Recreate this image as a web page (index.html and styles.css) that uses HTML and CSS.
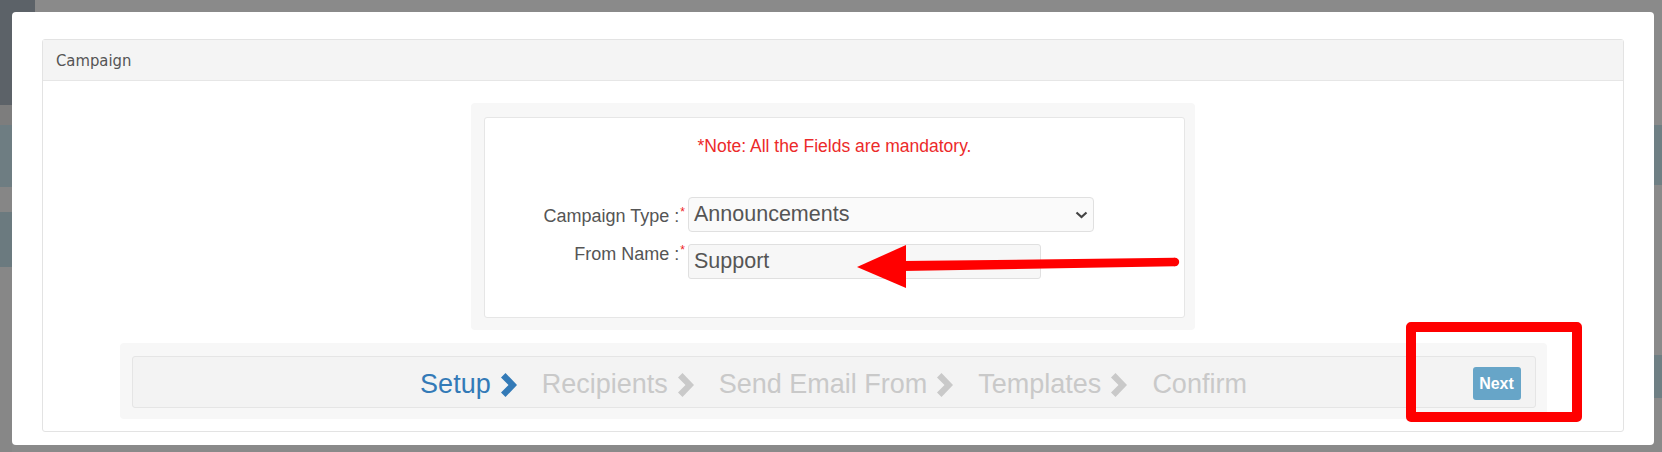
FILE: index.html
```html
<!DOCTYPE html>
<html>
<head>
<meta charset="utf-8">
<title>Campaign</title>
<link rel="stylesheet" href="styles.css">
</head>
<body>
<div class="modal">
  <div class="panel">
    <div class="panel-heading">Campaign</div>
    <div class="panel-body">
      <div class="well">
        <div class="card">
          <p class="note">*Note: All the Fields are mandatory.</p>
          <div class="row row-type">
            <label class="label label-type">Campaign Type :<sup>*</sup></label>
            <div class="select">
              <span>Announcements</span>
              <svg class="caret" width="13" height="8" viewBox="0 0 13 8"><path d="M1.5 1.5 L6.5 6 L11.5 1.5" fill="none" stroke="#444" stroke-width="2.2"/></svg>
            </div>
          </div>
          <div class="row row-name">
            <label class="label">From Name :<sup>*</sup></label>
            <div class="input">Support</div>
          </div>
        </div>
      </div>
      <div class="steps-wrap">
        <div class="steps">
          <div class="steps-list">
            <span class="step active">Setup<svg class="chev" width="17" height="24" viewBox="0 0 17 24"><polygon points="1,4.5 5.5,0 17,12 5.5,24 1,19.5 8.5,12"/></svg></span>
            <span class="step">Recipients<svg class="chev" width="17" height="24" viewBox="0 0 17 24"><polygon points="1,4.5 5.5,0 17,12 5.5,24 1,19.5 8.5,12"/></svg></span>
            <span class="step">Send Email From<svg class="chev" width="17" height="24" viewBox="0 0 17 24"><polygon points="1,4.5 5.5,0 17,12 5.5,24 1,19.5 8.5,12"/></svg></span>
            <span class="step">Templates<svg class="chev" width="17" height="24" viewBox="0 0 17 24"><polygon points="1,4.5 5.5,0 17,12 5.5,24 1,19.5 8.5,12"/></svg></span>
            <span class="step">Confirm</span>
          </div>
          <button class="btn-next">Next</button>
        </div>
      </div>
    </div>
  </div>
</div>
<svg class="arrow" width="1662" height="452" viewBox="0 0 1662 452">
  <polygon points="903,261 1175,257.8 1175,266.2 903,271" fill="#ff0000"/>
  <circle cx="1175" cy="262" r="4.2" fill="#ff0000"/>
  <polygon points="857,267 906,245 906,288" fill="#ff0000"/>
</svg>
<div class="highlight"></div>
</body>
</html>
```

FILE: styles.css
```css
html, body {
  margin: 0;
  padding: 0;
}

body {
  position: relative;
  width: 1662px;
  height: 452px;
  overflow: hidden;
  font-family: "Liberation Sans", Arial, sans-serif;
  background-color: #8a8a8a;
  background-image:
    linear-gradient(#5c6268, #5c6268),
    linear-gradient(to bottom, #5c6268 0 105px, #7d7d7d 105px 125px, #6e7d82 125px 187px, #868686 187px 212px, #6b7a7f 212px 267px, #878787 267px),
    linear-gradient(to bottom, #8a8a8a 0 125px, #6f7f84 125px 185px, #8a8a8a 185px 355px, #6f7f84 355px 398px, #8a8a8a 398px);
  background-size: 35px 105px, 12px 100%, 10px 100%;
  background-position: 0 0, 0 0, right top;
  background-repeat: no-repeat;
}

.modal {
  margin: 12px 0 0 12px;
  width: 1642px;
  height: 433px;
  box-sizing: border-box;
  padding: 27px 30px 13px 30px;
  background: #ffffff;
  border-radius: 4px;
}

.panel {
  height: 100%;
  box-sizing: border-box;
  border: 1px solid #e3e3e3;
  border-radius: 3px;
  display: flex;
  flex-direction: column;
}

.panel-heading {
  height: 41px;
  box-sizing: border-box;
  display: flex;
  align-items: center;
  padding-left: 13px;
  background: #f4f4f4;
  border-bottom: 1px solid #e6e6e6;
  font-family: "DejaVu Sans Condensed", "DejaVu Sans", sans-serif;
  font-stretch: condensed;
  font-size: 16.5px;
  color: #555555;
}

.panel-body {
  flex: 1;
  display: flex;
  flex-direction: column;
  align-items: center;
  padding-top: 22px;
}

.well {
  width: 724px;
  box-sizing: border-box;
  padding: 14px 10px 12px 13px;
  background: #f7f7f7;
  border-radius: 4px;
}

.card {
  height: 201px;
  box-sizing: border-box;
  padding-top: 18px;
  background: #ffffff;
  border: 1px solid #e6e6e6;
  border-radius: 3px;
}

.note {
  margin: 0;
  text-align: center;
  color: #ec2a2a;
  font-size: 17.5px;
  line-height: 20px;
}

.row {
  display: flex;
  align-items: flex-start;
}

.row-type {
  margin-top: 41px;
}

.row-name {
  margin-top: 12px;
}

.label {
  width: 200px;
  margin-right: 3px;
  text-align: right;
  font-size: 18px;
  line-height: 20px;
  color: #555555;
}

.label-type {
  padding-top: 9px;
}

.label sup {
  color: #ee1c1c;
  font-size: 12px;
  line-height: 12px;
  vertical-align: top;
  margin-left: 1px;
}

.select {
  width: 406px;
  height: 35px;
  box-sizing: border-box;
  display: flex;
  align-items: center;
  justify-content: space-between;
  padding: 0 5px 0 5px;
  background: #fafafa;
  border: 1px solid #e0e0e0;
  border-radius: 4px;
  font-size: 21.5px;
  color: #555555;
}

.caret {
  display: block;
}

.input {
  width: 353px;
  height: 35px;
  box-sizing: border-box;
  display: flex;
  align-items: center;
  padding-left: 5px;
  background: #f7f7f7;
  border: 1px solid #e0e0e0;
  border-radius: 3px;
  font-size: 21.5px;
  color: #555555;
}

.steps-wrap {
  margin-top: 13px;
  width: 1427px;
  box-sizing: border-box;
  padding: 13px 11px 11px 12px;
  background: #f7f7f7;
  border-radius: 4px;
}

.steps {
  height: 52px;
  box-sizing: border-box;
  display: grid;
  grid-template-columns: 1fr auto 1fr;
  align-items: center;
  background: #f3f3f3;
  border: 1px solid #e5e5e5;
  border-radius: 3px;
}

.steps-list {
  grid-column: 2;
  display: flex;
  align-items: center;
  padding-top: 5px;
  font-size: 27px;
  line-height: 31px;
  color: #c9c9c9;
}

.step {
  display: flex;
  align-items: center;
}

.step .chev {
  margin-left: 9px;
  margin-right: 25px;
  fill: #c9c9c9;
}

.step.active {
  color: #337ab7;
}

.step.active .chev {
  fill: #337ab7;
}

.btn-next {
  grid-column: 3;
  justify-self: end;
  margin-right: 14px;
  margin-top: 3px;
  width: 48px;
  height: 33px;
  padding: 0;
  border: 0;
  border-radius: 3px;
  background: #67a5c8;
  color: #ffffff;
  font-family: "Liberation Sans", Arial, sans-serif;
  font-weight: bold;
  font-size: 16px;
}

.arrow {
  position: absolute;
  left: 0;
  top: 0;
  pointer-events: none;
}

.highlight {
  position: absolute;
  left: 1406px;
  top: 322px;
  width: 176px;
  height: 100px;
  box-sizing: border-box;
  border: 10px solid #ff0000;
  border-radius: 5px;
  pointer-events: none;
}
```
